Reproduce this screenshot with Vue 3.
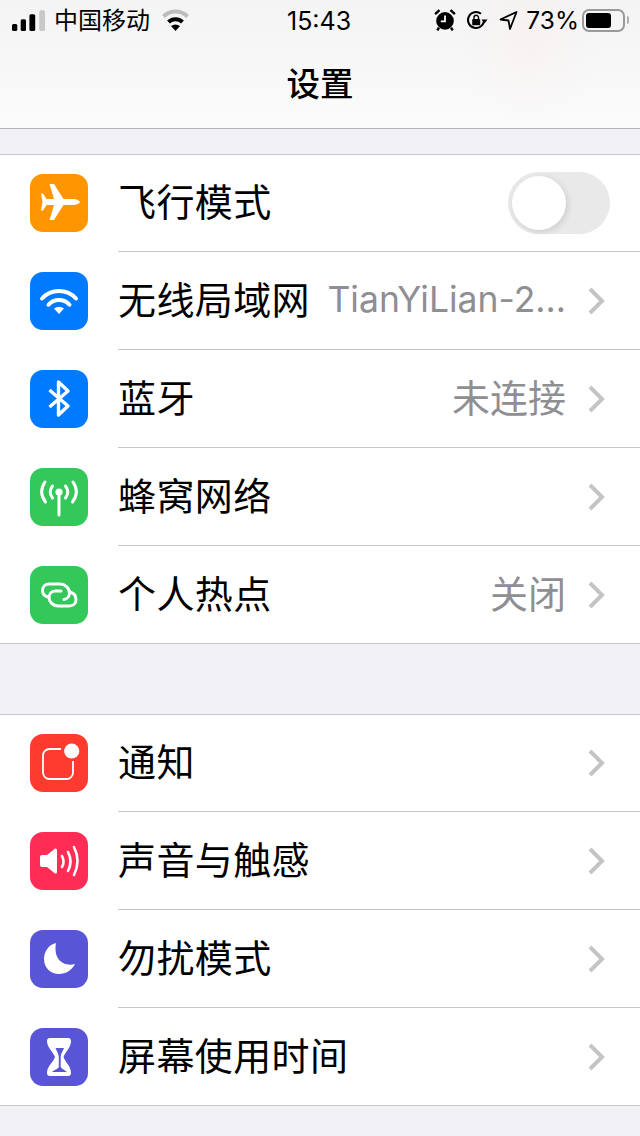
<template>
  <div class="screen">
    <div class="nav">
      <div class="status">
        <div class="status-left">
          <svg class="signal" width="33" height="21" viewBox="0 0 33 21">
            <rect x="0" y="14" width="5.3" height="7" rx="1.5" fill="#000" />
            <rect x="8.7" y="9.3" width="5.3" height="11.7" rx="1.5" fill="#000" />
            <rect x="17.4" y="4.3" width="5.8" height="16.7" rx="1.5" fill="#000" />
            <rect x="27.3" y="0.3" width="5.7" height="20.7" rx="1.5" fill="#c8c8c8" />
          </svg>
          <span class="carrier">中国移动</span>
          <svg class="status-wifi" width="29" height="22" viewBox="0 0 58 44">
            <path d="M5 15 A34 34 0 0 1 53 15" fill="none" stroke="#bdbdbd" stroke-width="8" />
            <path d="M15 26 A20 20 0 0 1 43 26" fill="none" stroke="#000" stroke-width="8" />
            <path d="M20 34 Q29 28 38 34 L29 44 Z" fill="#000" />
          </svg>
        </div>
        <span class="clock">15:43</span>
        <div class="status-right">
          <svg width="22" height="22" viewBox="0 0 20 20">
            <circle cx="10" cy="10.8" r="8" fill="#000" />
            <path d="M10 6 V11.3 H6.2" fill="none" stroke="#fff" stroke-width="1.6" />
            <path d="M1 4.6 L5 1 M19 4.6 L15 1 M4.5 17 L3 19.5 M15.5 17 L17 19.5" stroke="#000" stroke-width="2.2" />
          </svg>
          <svg class="rot" width="22" height="20" viewBox="0 0 22 20">
            <path d="M18 10 A8 8 0 1 1 15 3.8" fill="none" stroke="#000" stroke-width="2" />
            <path d="M15.5 9.5 L21.5 9.5 L18.5 13.5 Z" fill="#000" />
            <rect x="6.2" y="9" width="8" height="6.2" rx="1" fill="#000" />
            <path d="M8 9 V7.5 A2.2 2.2 0 0 1 12.5 7.5 V9" fill="none" stroke="#000" stroke-width="1.4" />
          </svg>
          <svg class="loc" width="19" height="20" viewBox="0 0 19 20">
            <path d="M1.5 9.5 L17.5 2 L11 19 L9.5 10.5 Z" fill="none" stroke="#000" stroke-width="1.8" stroke-linejoin="round" />
          </svg>
          <span class="percent">73%</span>
          <div class="battery"><div class="battery-fill"></div></div>
          <div class="battery-tip"></div>
        </div>
      </div>
      <div class="title">设置</div>
    </div>

    <div v-for="(group, g) in groups" :key="g" class="group">
      <div v-for="row in group" :key="row.label" class="row">
        <div class="icon" :class="row.icon">
          <svg width="58" height="58" viewBox="0 0 58 58">
            <path v-if="row.icon === 'plane'" fill="#fff" d="M50 28 C50 26.5 46 25 43 25 L33.5 25 L24 10 L19.5 10 L24 25 L16.5 25 L13 19.5 L11 19.5 L12.5 28 L11 36.5 L13 36.5 L16.5 31 L24 31 L19.5 46 L24 46 L33.5 31 L43 31 C46 31 50 29.5 50 28Z" />
            <g v-else-if="row.icon === 'wifi'">
              <path d="M12 26.5 A23 23 0 0 1 46 26.5" fill="none" stroke="#fff" stroke-width="4" stroke-linecap="round" />
              <path d="M18.5 32.7 A14 14 0 0 1 39.5 32.7" fill="none" stroke="#fff" stroke-width="4" stroke-linecap="round" />
              <path d="M24 36.5 Q29 33 34 36.5 L29 42 Z" fill="#fff" />
            </g>
            <path v-else-if="row.icon === 'bluetooth'" d="M19.5 20 L38 36 L28.5 45 V12 L38 21 L19.5 37" fill="none" stroke="#fff" stroke-width="3.4" stroke-linejoin="round" />
            <g v-else-if="row.icon === 'cell'" fill="none" stroke="#fff" stroke-width="3" stroke-linecap="round">
              <circle cx="29" cy="24" r="3.6" fill="#fff" stroke="none" />
              <path d="M29 25 V47" />
              <path d="M15 14 Q8 24 15.5 34" />
              <path d="M22.5 18 Q18 24 22.5 30" />
              <path d="M43 14 Q50 24 42.5 34" />
              <path d="M35.5 18 Q40 24 35.5 30" />
            </g>
            <g v-else-if="row.icon === 'hotspot'" fill="none" stroke="#fff" stroke-width="3" stroke-linecap="round">
              <path d="M18 31 C14.5 30 12.5 27.5 12.5 24.5 C12.5 20.5 15.5 18 19 18 H30 C35 18 39.5 22 39.5 27 C39.5 30.5 37 33 34 33.5" />
              <path d="M41 26.5 C44 27.5 46 30.5 46 33.5 C46 37.5 43 40 39.5 40 H28 C23 40 19 36 19 31.5 C19 27.5 22 25 25.5 25 H31" />
            </g>
            <g v-else-if="row.icon === 'notify'">
              <path d="M31 15 H19.5 A6.5 6.5 0 0 0 13 21.5 V38.5 A6.5 6.5 0 0 0 19.5 45 H36.5 A6.5 6.5 0 0 0 43 38.5 V27" fill="none" stroke="#fff" stroke-width="1.8" />
              <circle cx="41.7" cy="17" r="7.6" fill="#fff" />
            </g>
            <g v-else-if="row.icon === 'sound'">
              <path fill="#fff" d="M12 23 H17 L25 16.5 Q27 16 27 18 V40 Q27 42 25 41.5 L17 35 H12 Q10 35 10 33 V25 Q10 23 12 23Z" />
              <g fill="none" stroke="#fff" stroke-width="2.6" stroke-linecap="round">
                <path d="M32 24 Q35 30 32 35" />
                <path d="M38 20 Q43 29.5 38 39" />
                <path d="M44 15 Q51 29 44 43" />
              </g>
            </g>
            <path v-else-if="row.icon === 'moon'" fill="#fff" d="M26 13 C18 15 14 22 14 29 C14 38 21 44 29 44 C36 44 42 40 45 34 C34 37 23 30 26 13Z" />
            <g v-else-if="row.icon === 'hourglass'">
              <path fill="#fff" d="M20 10 H38 Q41 10 41 13 C41 20 35 24 33.5 29 C35 34 41 38 41 45 Q41 48 38 48 H20 Q17 48 17 45 C17 38 23.5 34 25 29 C23.5 24 17 20 17 13 Q17 10 20 10Z" />
              <path fill="#5856d6" d="M25.5 20 H34 C33 23 31 25 30.7 29 V39 C31.5 41 35 42 37 44 H22 C24 42 28 41 28.8 39 V29 C28.5 25 26.5 23 25.5 20Z" />
            </g>
          </svg>
        </div>
        <div class="label">{{ row.label }}</div>
        <div v-if="row.toggle" class="toggle"><div class="knob"></div></div>
        <template v-else>
          <div v-if="row.value" class="value" :class="{ latin: row.latin }">{{ row.value }}</div>
          <svg class="chevron" width="20" height="30" viewBox="0 0 20 30">
            <path d="M4 3 L16 15 L4 27" fill="none" stroke="#c4c4c7" stroke-width="4" />
          </svg>
        </template>
      </div>
    </div>
  </div>
</template>

<script setup>
const groups = [
  [
    { label: '飞行模式', icon: 'plane', toggle: true },
    { label: '无线局域网', icon: 'wifi', value: 'TianYiLian-2...', latin: true },
    { label: '蓝牙', icon: 'bluetooth', value: '未连接' },
    { label: '蜂窝网络', icon: 'cell' },
    { label: '个人热点', icon: 'hotspot', value: '关闭' },
  ],
  [
    { label: '通知', icon: 'notify' },
    { label: '声音与触感', icon: 'sound' },
    { label: '勿扰模式', icon: 'moon' },
    { label: '屏幕使用时间', icon: 'hourglass' },
  ],
]
</script>

<style>
html, body {
  margin: 0;
  background: #f1f1f6;
}
</style>

<style scoped>
.screen {
  width: 640px;
  height: 1136px;
  overflow: hidden;
  background: #f1f1f6;
  font-family: Inter, "Noto Sans CJK SC", sans-serif;
  color: #000;
}

.nav {
  height: 128px;
  border-bottom: 1px solid #b2b2b8;
  background:
    radial-gradient(ellipse 70px 90px at 530px 40px, rgba(255, 225, 220, 0.18), transparent),
    linear-gradient(#f4f4f4, #fbfbfb);
}

.status {
  height: 40px;
  position: relative;
  display: flex;
  justify-content: space-between;
  align-items: center;
  padding: 0 11px 0 12px;
}

.status-left,
.status-right {
  display: flex;
  align-items: center;
}

.carrier {
  font-size: 24px;
  margin-left: 9px;
  padding-bottom: 4px;
}

.status-wifi {
  margin-left: 11px;
}

.clock {
  position: absolute;
  left: 287px;
  margin-top: 2px;
  font-size: 25px;
  font-family: Inter, sans-serif;
}

.rot {
  margin-left: 10px;
}

.loc {
  margin-left: 11px;
}

.percent {
  font-size: 24.5px;
  margin-left: 8px;
}

.battery {
  width: 43px;
  height: 23px;
  margin-left: 3px;
  border: 2px solid #9a9a9a;
  border-radius: 7px;
  padding: 2px;
  box-sizing: border-box;
}

.battery-fill {
  width: 25px;
  height: 100%;
  border-radius: 3px;
  background: #000;
}

.battery-tip {
  width: 2px;
  height: 8px;
  margin-left: 2px;
  border-radius: 0 2px 2px 0;
  background: #b0b0b0;
}

.title {
  text-align: center;
  font-size: 33.5px;
  font-weight: 500;
  line-height: 46px;
  margin-top: 21px;
}

.group {
  margin-top: 25px;
  background: #fff;
  border-top: 1px solid #c8c8cc;
}

.group + .group {
  margin-top: 70px;
}

.row {
  height: 98px;
  padding: 1px 30px;
  box-sizing: border-box;
  display: flex;
  align-items: center;
  position: relative;
}

.row:first-child {
  height: 97px;
  padding-top: 0;
}

.row::after {
  content: "";
  position: absolute;
  left: 118px;
  right: 0;
  bottom: 0;
  height: 1px;
  background: #c8c8cc;
}

.row:last-child::after {
  left: 0;
}

.icon {
  width: 58px;
  height: 58px;
  border-radius: 13px;
  flex: none;
}

.icon svg {
  display: block;
}

.plane { background: #ff9500; }
.wifi, .bluetooth { background: #007aff; }
.cell, .hotspot { background: #34c759; }
.notify { background: #ff3b30; }
.sound { background: #ff2d55; }
.moon, .hourglass { background: #5856d6; }

.label {
  margin-left: 30px;
  padding-bottom: 3px;
  font-size: 38px;
  letter-spacing: 0.4px;
  line-height: 50px;
  white-space: nowrap;
}

.value {
  margin-left: auto;
  padding-bottom: 2px;
  font-size: 38px;
  line-height: 50px;
  color: #8e8e93;
  white-space: nowrap;
}

.value.latin {
  font-size: 35.5px;
}

.chevron {
  flex: none;
  margin-left: 20px;
  margin-right: 4px;
}

.label + .chevron {
  margin-left: auto;
}

.toggle {
  width: 102px;
  height: 62px;
  margin-left: auto;
  border-radius: 31px;
  background: #e9e9ea;
  padding: 4px;
  box-sizing: border-box;
}

.knob {
  width: 54px;
  height: 54px;
  border-radius: 50%;
  background: #fff;
  box-shadow: 2px 2px 6px rgba(0, 0, 0, 0.12);
}
</style>
